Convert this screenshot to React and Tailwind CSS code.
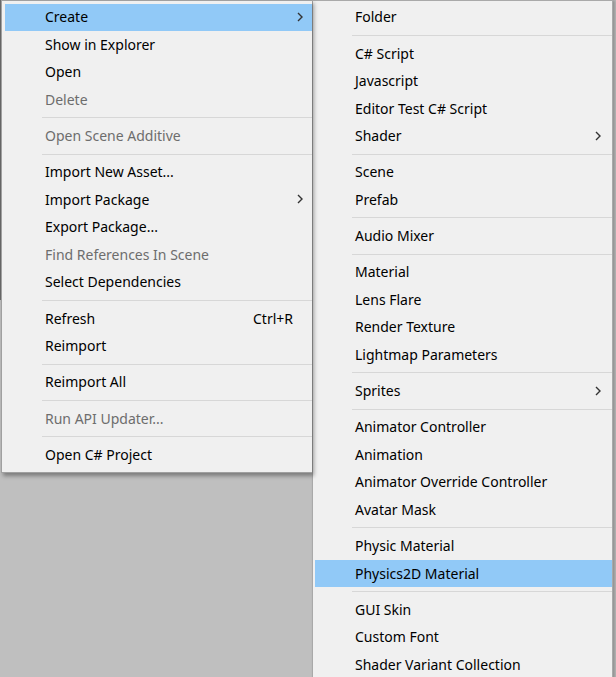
import React from 'react';

const leftMenu = [
    { label: 'Create', sub: true, active: true },
    { label: 'Show in Explorer' },
    { label: 'Open' },
    { label: 'Delete', disabled: true },
    { sep: true },
    { label: 'Open Scene Additive', disabled: true },
    { sep: true },
    { label: 'Import New Asset...' },
    { label: 'Import Package', sub: true },
    { label: 'Export Package...' },
    { label: 'Find References In Scene', disabled: true },
    { label: 'Select Dependencies' },
    { sep: true },
    { label: 'Refresh', shortcut: 'Ctrl+R' },
    { label: 'Reimport' },
    { sep: true },
    { label: 'Reimport All' },
    { sep: true },
    { label: 'Run API Updater...', disabled: true },
    { sep: true },
    { label: 'Open C# Project' },
];

const createMenu = [
    { label: 'Folder' },
    { sep: true },
    { label: 'C# Script' },
    { label: 'Javascript' },
    { label: 'Editor Test C# Script' },
    { label: 'Shader', sub: true },
    { sep: true },
    { label: 'Scene' },
    { label: 'Prefab' },
    { sep: true },
    { label: 'Audio Mixer' },
    { sep: true },
    { label: 'Material' },
    { label: 'Lens Flare' },
    { label: 'Render Texture' },
    { label: 'Lightmap Parameters' },
    { sep: true },
    { label: 'Sprites', sub: true },
    { sep: true },
    { label: 'Animator Controller' },
    { label: 'Animation' },
    { label: 'Animator Override Controller' },
    { label: 'Avatar Mask' },
    { sep: true },
    { label: 'Physic Material' },
    { label: 'Physics2D Material', active: true },
    { sep: true },
    { label: 'GUI Skin' },
    { label: 'Custom Font' },
    { label: 'Shader Variant Collection' },
];

const Chevron = () => (
    <svg width="6" height="10" viewBox="0 0 6 10" className="shrink-0">
        <path d="M1 1 L5 5 L1 9" fill="none" stroke="#333" strokeWidth="1.4" />
    </svg>
);

const MenuList = ({ items, right }) => (
    <>
        {items.map((item, i) =>
            item.sep ? (
                <div key={i} className="h-[8.75px] flex items-center pl-[37px]">
                    <div className="h-px w-full bg-[#d7d7d7]" />
                </div>
            ) : (
                <div
                    key={i}
                    className={`h-[27.5px] flex items-center pl-[40px] pb-[1px] ${right ? 'pr-[11px]' : 'pr-[9px]'} ${item.active ? 'bg-[#91c9f7]' : ''} ${item.disabled ? 'text-[#6d6d6d]' : 'text-black'}`}
                >
                    <span className="flex-1 whitespace-nowrap">{item.label}</span>
                    {item.shortcut && <span className="pr-[10px]">{item.shortcut}</span>}
                    {item.sub && <Chevron />}
                </div>
            )
        )}
    </>
);

export default function App() {
    return (
        <div
            className="w-[616px] h-[677px] overflow-hidden bg-[#bfbfbf] flex items-start text-[14px]"
            style={{ fontFamily: '"Noto Sans", "Open Sans", sans-serif' }}
        >
            <div className="w-px h-[300px] bg-[#6a6a6a] shrink-0" />
            {/* Context menu */}
            <div className="w-[311px] shrink-0 bg-[#f0f0f0] border border-[#a0a0a0] border-r-0 pt-[2.5px] pb-[3px] pl-[3px] shadow-[2px_3px_4px_rgba(0,0,0,0.35)] z-10">
                <MenuList items={leftMenu} />
            </div>
            {/* Create submenu */}
            <div className="w-[301px] shrink-0 h-[700px] bg-[#f0f0f0] border border-[#a9a9a9] pt-[2.5px] pl-[2px] pr-0 shadow-[2px_0_3px_rgba(0,0,0,0.25)]">
                <MenuList items={createMenu} right />
            </div>
        </div>
    );
}
